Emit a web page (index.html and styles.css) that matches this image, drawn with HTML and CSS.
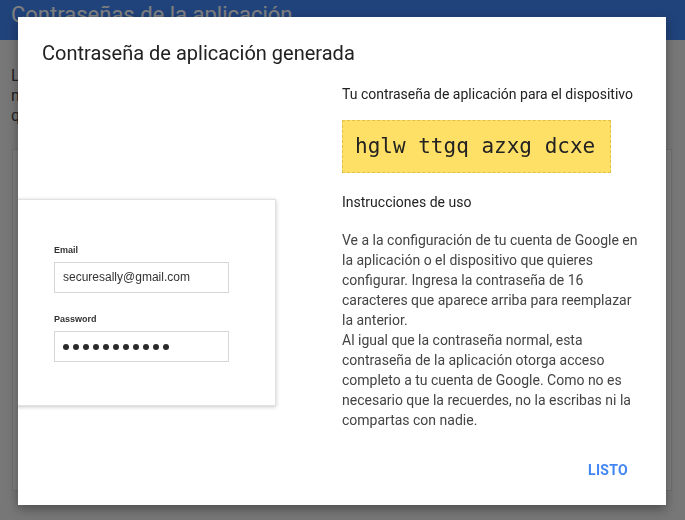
FILE: index.html
```html
<!DOCTYPE html>
<html lang="es">
<head>
<meta charset="utf-8">
<title>Contraseñas de la aplicación</title>
<link rel="stylesheet" href="styles.css">
</head>
<body>
<div class="page">
  <header class="topbar">Contraseñas de la aplicación</header>
  <div class="intro">
    <p>Las contraseñas de aplicación</p>
    <p>no compatibles con la verificación</p>
    <p>que no es necesario recordar.</p>
  </div>
  <div class="bgcard"></div>
</div>
<div class="overlay"></div>
<div class="dialog">
  <h1 class="title">Contraseña de aplicación generada</h1>
  <div class="content">
    <div class="illus">
      <div class="mock">
        <div class="mlabel">Email</div>
        <div class="minput">securesally@gmail.com</div>
        <div class="mlabel mlabel2">Password</div>
        <div class="minput dots"><span></span><span></span><span></span><span></span><span></span><span></span><span></span><span></span><span></span><span></span><span></span></div>
      </div>
    </div>
    <div class="info">
      <div class="sub">Tu contraseña de aplicación para el dispositivo</div>
      <div class="pw">hglw ttgq azxg dcxe</div>
      <div class="sub sub2">Instrucciones de uso</div>
      <p class="para">Ve a la configuración de tu cuenta de Google en la aplicación o el dispositivo que quieres configurar. Ingresa la contraseña de 16 caracteres que aparece arriba para reemplazar la anterior.<br>Al igual que la contraseña normal, esta contraseña de la aplicación otorga acceso completo a tu cuenta de Google. Como no es necesario que la recuerdes, no la escribas ni la compartas con nadie.</p>
    </div>
  </div>
  <div class="actions"><button class="btn">LISTO</button></div>
</div>
</body>
</html>
```
FILE: styles.css
```css
html, body {
  margin: 0;
  padding: 0;
  width: 685px;
  height: 520px;
  overflow: hidden;
  font-family: Roboto, "Noto Sans", sans-serif;
}
.page {
  background: #eeeeee;
  height: 520px;
}
.topbar {
  background: #4387f6;
  color: #ffffff;
  font-size: 22px;
  line-height: 30px;
  height: 30px;
  padding: 0 0 10px 11px;
}
.intro {
  padding: 26px 0 0 11px;
  color: #444;
  font-size: 16px;
  line-height: 20px;
  white-space: nowrap;
}
.intro p { margin: 0; }
.bgcard {
  margin: 23px 13px 0 12px;
  height: 340px;
  background: #fdfdfd;
  border: 1px solid #dcdcdc;
}
.overlay {
  position: fixed;
  inset: 0;
  background: rgba(0, 0, 0, 0.5);
}
.dialog {
  position: absolute;
  left: 18px;
  top: 17px;
  width: 648px;
  height: 488px;
  background: #fff;
  box-shadow: 0 4px 10px rgba(0, 0, 0, 0.35);
  box-sizing: border-box;
  padding: 24px 24px 0 24px;
  overflow: hidden;
  display: flex;
  flex-direction: column;
}
.title {
  margin: 0;
  font-size: 20px;
  line-height: 24px;
  font-weight: 400;
  color: #212121;
}
.content {
  display: flex;
  margin-top: 19px;
}
.illus {
  flex: 1;
}
.mock {
  margin: 115px 0 0 -30px;
  width: 264px;
  height: 207px;
  box-sizing: border-box;
  background: #fff;
  border: 1px solid #e2e2e2;
  box-shadow: 0 1px 4px rgba(0, 0, 0, 0.22);
  padding: 44px 0 0 41px;
  font-family: "Liberation Sans", Arial, sans-serif;
}
.mlabel {
  font-size: 9px;
  line-height: 12px;
  font-weight: 700;
  color: #333;
  height: 12px;
  margin-bottom: 6px;
}
.mlabel2 { margin-top: 20px; }
.minput {
  width: 175px;
  height: 31px;
  box-sizing: border-box;
  border: 1px solid #d6d6d6;
  padding: 0 8px;
  font-size: 12px;
  line-height: 29px;
  color: #333;
}
.dots {
  display: flex;
  align-items: center;
  gap: 4px;
}
.dots span {
  width: 6px;
  height: 6px;
  border-radius: 50%;
  background: #2a2a2a;
}
.info {
  width: 300px;
}
.sub {
  font-size: 14px;
  line-height: 20px;
  color: #222;
}
.pw {
  display: inline-block;
  margin-top: 16px;
  background: #ffe066;
  border: 1px dashed #e2c04a;
  font-family: "DejaVu Sans Mono", "Liberation Mono", monospace;
  font-size: 21px;
  line-height: 51px;
  padding: 0 15px 0 12px;
  color: #222;
}
.sub2 { margin-top: 19px; }
.para {
  margin: 18px 0 0 0;
  font-size: 14px;
  line-height: 20px;
  color: #444;
}
.actions {
  margin-top: auto;
  height: 72px;
  display: flex;
  justify-content: flex-end;
  align-items: flex-start;
}
.btn {
  border: 0;
  background: none;
  padding: 0;
  margin: 27px 14px 0 0;
  font-family: Roboto, sans-serif;
  font-size: 14px;
  line-height: 20px;
  font-weight: 700;
  color: #4285f4;
  letter-spacing: 0.3px;
}
```
